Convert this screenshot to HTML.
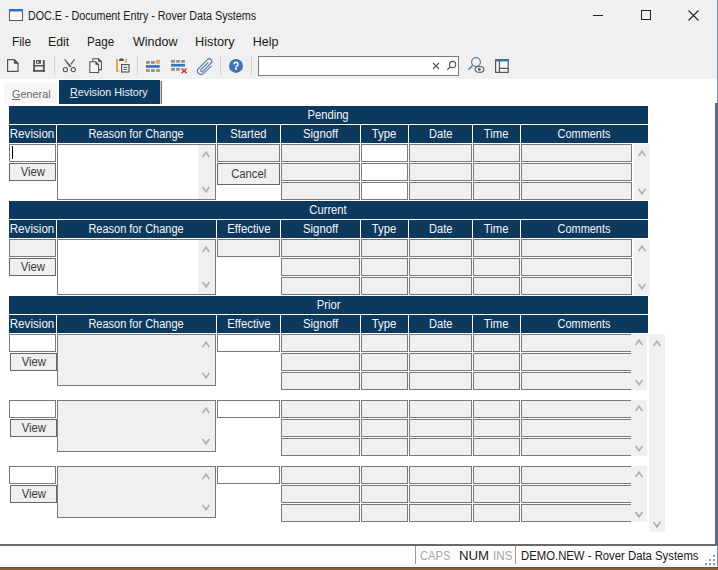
<!DOCTYPE html>
<html><head><meta charset="utf-8"><title>DOC.E - Document Entry</title>
<style>
html,body{margin:0;padding:0;}
body{width:718px;height:570px;position:relative;overflow:hidden;background:#fff;font-family:"Liberation Sans",sans-serif;}
body div,body svg{position:absolute;box-sizing:border-box;}
.seg{white-space:nowrap;color:#1a1a1a;}
.title{font-size:12px;line-height:20px;}
.menu{font-size:12.5px;line-height:18px;}
.tab{font-size:11.5px;line-height:18px;}
.status{font-size:12px;line-height:18px;}
.hdr{background:#0d395e;color:#f2f6fb;font-size:12px;text-align:center;white-space:nowrap;overflow:hidden;}
body span{display:inline-block;transform-origin:50% 50%;}
.fld{border:1px solid #7a7a7a;}
.fld.g{background:#f0f0f0;}
.fld.w{background:#fff;}
.btn{background:#f0f0f0;border:1px solid #676767;font-size:12px;text-align:center;color:#3a3a3a;line-height:15px;}
.sb{background:#f0f0f0;}
</style></head><body>
<div style="left:0;top:0;width:718px;height:79px;background:#f0f0f0"></div>
<svg style="left:9px;top:9px" width="14" height="12" viewBox="0 0 14 12"><rect x="0.5" y="0.5" width="13" height="11" fill="#fbfbfb" stroke="#5a5a5a"/><rect x="0" y="0" width="14" height="2.5" fill="#2f6fc0"/></svg>
<div class="seg title" style="left:28px;top:5.5px;transform:scaleX(0.893);transform-origin:0 0;">DOC.E - Document Entry - Rover Data Systems</div>
<div style="left:593px;top:15px;width:10px;height:1px;background:#222"></div>
<div style="left:641px;top:10px;width:10px;height:10px;border:1px solid #222"></div>
<svg style="left:688px;top:10px" width="11" height="11" viewBox="0 0 11 11"><path d="M0.5 0.5 L10.5 10.5 M10.5 0.5 L0.5 10.5" stroke="#222" stroke-width="1.1"/></svg>
<div class="seg menu" style="left:11.7px;top:33px;transform:scaleX(0.94);transform-origin:0 0;">File</div>
<div class="seg menu" style="left:48.3px;top:33px;transform:scaleX(0.98);transform-origin:0 0;">Edit</div>
<div class="seg menu" style="left:87.3px;top:33px;transform:scaleX(0.93);transform-origin:0 0;">Page</div>
<div class="seg menu" style="left:133.0px;top:33px;">Window</div>
<div class="seg menu" style="left:195.4px;top:33px;transform:scaleX(1.02);transform-origin:0 0;">History</div>
<div class="seg menu" style="left:252.7px;top:33px;">Help</div>
<svg style="left:4px;top:56px" width="20" height="20" viewBox="0 0 20 20"><path d="M3.6 3.6 H10.3 L14 7.3 V15.4 H3.6 Z" fill="#f4f4f4" stroke="#555" stroke-width="1.2"/><path d="M10.3 3.6 V7.3 H14 Z" fill="#555" stroke="#555" stroke-width="1"/></svg>
<svg style="left:30px;top:56px" width="20" height="20" viewBox="0 0 20 20"><rect x="3.2" y="4" width="1.8" height="11.8" fill="#555"/><rect x="12.9" y="4" width="1.8" height="11.8" fill="#555"/><rect x="3.2" y="14" width="11.5" height="1.8" fill="#555"/><rect x="3.2" y="9" width="11.5" height="1.5" fill="#555"/><rect x="6" y="4" width="5" height="3.7" fill="#555"/><rect x="7" y="5" width="1.3" height="1.8" fill="#f0f0f0"/></svg>
<div style="left:54px;top:56px;width:1px;height:19px;background:#d0d0d0"></div>
<svg style="left:60px;top:56px" width="20" height="20" viewBox="0 0 20 20"><polygon points="4.1,3.4 5,3 11.4,10.3 9.8,11.4" fill="#555"/><polygon points="14.3,3 15.1,3.5 11.4,8.7 10.4,7.9" fill="#555"/><circle cx="5.4" cy="13.6" r="2.1" fill="none" stroke="#555" stroke-width="1.1"/><circle cx="13.3" cy="13.6" r="2.1" fill="none" stroke="#555" stroke-width="1.1"/></svg>
<svg style="left:86px;top:55px" width="20" height="20" viewBox="0 0 20 20"><path d="M6.8 3.8 H12.6 L15.4 6.6 V14.6 H6.8 Z" fill="#f7f7f7" stroke="#555" stroke-width="1.1"/><path d="M12.6 3.8 V6.6 H15.4 Z" fill="#555" stroke="#555" stroke-width="0.8"/><path d="M3.8 6.8 H9.8 L12.6 9.6 V17.5 H3.8 Z" fill="#f7f7f7" stroke="#555" stroke-width="1.1"/><path d="M9.8 6.8 V9.6 H12.6 Z" fill="#555" stroke="#555" stroke-width="0.8"/></svg>
<svg style="left:112px;top:55px" width="20" height="20" viewBox="0 0 20 20"><rect x="4" y="4" width="1.9" height="12.5" fill="#e9a03a"/><rect x="4" y="15.3" width="3.5" height="1.2" fill="#e9a03a"/><rect x="13.1" y="4" width="1.6" height="3.6" fill="#d9a050"/><path d="M7 6 V4.5 Q9.4 2.2 11.8 4.5 V6 Z" fill="#555"/><rect x="9.6" y="9.6" width="7.4" height="7.4" fill="#fafafa" stroke="#555" stroke-width="1.2"/><path d="M11.3 12.3 H15.3 M11.3 14.4 H15.3" stroke="#555" stroke-width="1"/></svg>
<div style="left:137px;top:56px;width:1px;height:19px;background:#d0d0d0"></div>
<svg style="left:143px;top:56px" width="20" height="20" viewBox="0 0 20 20"><rect x="3" y="5" width="3.8" height="2.8" fill="#8e8e8e"/><rect x="8" y="5" width="3.8" height="2.8" fill="#8e8e8e"/><rect x="13.2" y="3.8" width="3.6" height="3.9" fill="#eaa040"/><rect x="3" y="9.1" width="13.8" height="2.7" fill="#3b72b8"/><rect x="3" y="13.2" width="3.8" height="2.7" fill="#8e8e8e"/><rect x="8" y="13.2" width="3.8" height="2.7" fill="#8e8e8e"/><rect x="13.2" y="13.2" width="3.6" height="2.7" fill="#8e8e8e"/></svg>
<svg style="left:168px;top:56px" width="22" height="22" viewBox="0 0 22 22"><rect x="3.1" y="4" width="3.8" height="2.7" fill="#8e8e8e"/><rect x="8.1" y="4" width="3.7" height="2.7" fill="#8e8e8e"/><rect x="13.1" y="4" width="3.9" height="2.7" fill="#8e8e8e"/><rect x="3.1" y="7.9" width="13.9" height="2.7" fill="#3b72b8"/><rect x="3.1" y="12" width="3.8" height="2.8" fill="#8e8e8e"/><rect x="8.1" y="12" width="3.7" height="2.8" fill="#8e8e8e"/><path d="M13.6 12.5 L18.6 17.2 M18.6 12.5 L13.6 17.2" stroke="#c83a3a" stroke-width="1.6"/></svg>
<svg style="left:194px;top:55px" width="22" height="22" viewBox="0 0 22 22"><path d="M17.6 10.8 L9.4 18.4 a3.4 3.4 0 0 1 -4.9 -4.8 L13.4 4.6 a2.5 2.5 0 0 1 3.6 3.6 L8.8 16.4 a1.2 1.2 0 0 1 -1.8 -1.7 L14.3 7.4" fill="#e6f0fa" fill-opacity="0.6" stroke="#56799f" stroke-width="1.15"/></svg>
<div style="left:220px;top:56px;width:1px;height:19px;background:#d0d0d0"></div>
<svg style="left:225px;top:55px" width="22" height="22" viewBox="0 0 22 22"><circle cx="11" cy="10.9" r="7" fill="#3f74b6"/><path d="M9 9.2 a2 2 0 1 1 3 1.7 c-0.7 0.4 -1 0.7 -1 1.5" fill="none" stroke="#fff" stroke-width="1.5"/><rect x="10.1" y="13" width="1.8" height="1.7" fill="#fff"/></svg>
<div style="left:251px;top:56px;width:1px;height:19px;background:#d0d0d0"></div>
<div style="left:258px;top:56px;width:201px;height:20px;background:#fff;border:1px solid #7a7a7a"></div>
<svg style="left:432px;top:62px" width="8" height="8" viewBox="0 0 8 8"><path d="M1 1 L7 7 M7 1 L1 7" stroke="#555" stroke-width="1.1"/></svg>
<svg style="left:446px;top:60px" width="11" height="11" viewBox="0 0 11 11"><circle cx="6.6" cy="4.5" r="3.1" fill="none" stroke="#555" stroke-width="1.1"/><path d="M4.4 6.8 L1.3 9.9" stroke="#555" stroke-width="1.3"/></svg>
<svg style="left:464px;top:54px" width="24" height="22" viewBox="0 0 24 22"><circle cx="12" cy="8" r="4.4" fill="none" stroke="#5a7ea6" stroke-width="1.2"/><path d="M8.8 11.3 L4.3 15.8" stroke="#5a7ea6" stroke-width="1.5"/><ellipse cx="15.5" cy="15.4" rx="4.4" ry="2.9" fill="#f0f0f0" stroke="#555" stroke-width="1.1"/><circle cx="15.3" cy="15.4" r="1.4" fill="#555"/></svg>
<svg style="left:494px;top:58px" width="16" height="16" viewBox="0 0 16 16"><rect x="1.6" y="1.6" width="12.6" height="12.8" fill="#f6f6f6" stroke="#555" stroke-width="1.2"/><rect x="1" y="1" width="14" height="2.4" fill="#3d6fb0"/><path d="M5.4 3 V14.4 M5.4 10.4 H14.4" stroke="#555" stroke-width="1.2"/></svg>
<div style="left:4px;top:83px;width:53px;height:20px;background:#f6f6f6"></div>
<div class="seg tab" style="left:11.9px;top:84.5px;transform:scaleX(0.945);transform-origin:0 0;color:#6a6a6a;"><u>G</u>eneral</div>
<div style="left:59px;top:80px;width:101px;height:24px;background:#0d395e"></div>
<div style="left:160px;top:81px;width:1px;height:23px;background:#c8ccd0"></div>
<div style="left:161px;top:81px;width:1px;height:23px;background:#7a7068"></div>
<div class="seg tab" style="left:70.0px;top:82.5px;transform:scaleX(0.935);transform-origin:0 0;color:#eaf2fb;"><u>R</u>evision History</div>
<div class="hdr" style="left:9px;top:106px;width:639px;height:18px;line-height:19px"><span style="transform:scaleX(0.935)">Pending</span></div>
<div class="hdr" style="left:9px;top:125px;width:47px;height:18px;line-height:18px"><span style="transform:scaleX(0.97)">Revision</span></div>
<div class="hdr" style="left:57px;top:125px;width:159px;height:18px;line-height:18px"><span style="transform:scaleX(0.915)">Reason for Change</span></div>
<div class="hdr" style="left:217px;top:125px;width:63px;height:18px;line-height:18px"><span style="transform:scaleX(0.935)">Started</span></div>
<div class="hdr" style="left:281px;top:125px;width:79px;height:18px;line-height:18px"><span style="transform:scaleX(0.95)">Signoff</span></div>
<div class="hdr" style="left:361px;top:125px;width:47px;height:18px;line-height:18px"><span style="transform:scaleX(0.945)">Type</span></div>
<div class="hdr" style="left:409px;top:125px;width:63px;height:18px;line-height:18px"><span style="transform:scaleX(0.925)">Date</span></div>
<div class="hdr" style="left:473px;top:125px;width:47px;height:18px;line-height:18px"><span style="transform:scaleX(0.94)">Time</span></div>
<div class="hdr" style="left:521px;top:125px;width:127px;height:18px;line-height:18px"><span style="transform:scaleX(0.91)">Comments</span></div>
<div class="hdr" style="left:9px;top:201px;width:639px;height:18px;line-height:19px"><span style="transform:scaleX(0.935)">Current</span></div>
<div class="hdr" style="left:9px;top:220px;width:47px;height:18px;line-height:18px"><span style="transform:scaleX(0.97)">Revision</span></div>
<div class="hdr" style="left:57px;top:220px;width:159px;height:18px;line-height:18px"><span style="transform:scaleX(0.915)">Reason for Change</span></div>
<div class="hdr" style="left:217px;top:220px;width:63px;height:18px;line-height:18px"><span style="transform:scaleX(0.945)">Effective</span></div>
<div class="hdr" style="left:281px;top:220px;width:79px;height:18px;line-height:18px"><span style="transform:scaleX(0.95)">Signoff</span></div>
<div class="hdr" style="left:361px;top:220px;width:47px;height:18px;line-height:18px"><span style="transform:scaleX(0.945)">Type</span></div>
<div class="hdr" style="left:409px;top:220px;width:63px;height:18px;line-height:18px"><span style="transform:scaleX(0.925)">Date</span></div>
<div class="hdr" style="left:473px;top:220px;width:47px;height:18px;line-height:18px"><span style="transform:scaleX(0.94)">Time</span></div>
<div class="hdr" style="left:521px;top:220px;width:127px;height:18px;line-height:18px"><span style="transform:scaleX(0.91)">Comments</span></div>
<div class="hdr" style="left:9px;top:296px;width:639px;height:18px;line-height:19px"><span style="transform:scaleX(0.935)">Prior</span></div>
<div class="hdr" style="left:9px;top:315px;width:47px;height:18px;line-height:18px"><span style="transform:scaleX(0.97)">Revision</span></div>
<div class="hdr" style="left:57px;top:315px;width:159px;height:18px;line-height:18px"><span style="transform:scaleX(0.915)">Reason for Change</span></div>
<div class="hdr" style="left:217px;top:315px;width:63px;height:18px;line-height:18px"><span style="transform:scaleX(0.945)">Effective</span></div>
<div class="hdr" style="left:281px;top:315px;width:79px;height:18px;line-height:18px"><span style="transform:scaleX(0.95)">Signoff</span></div>
<div class="hdr" style="left:361px;top:315px;width:47px;height:18px;line-height:18px"><span style="transform:scaleX(0.945)">Type</span></div>
<div class="hdr" style="left:409px;top:315px;width:63px;height:18px;line-height:18px"><span style="transform:scaleX(0.925)">Date</span></div>
<div class="hdr" style="left:473px;top:315px;width:47px;height:18px;line-height:18px"><span style="transform:scaleX(0.94)">Time</span></div>
<div class="hdr" style="left:521px;top:315px;width:127px;height:18px;line-height:18px"><span style="transform:scaleX(0.91)">Comments</span></div>
<div class="fld w" style="left:9px;top:144px;width:47px;height:18px;"></div>
<div style="left:12px;top:146px;width:1px;height:13px;background:#000"></div>
<div class="btn" style="left:9px;top:163px;width:47px;height:18px;line-height:16px"><span style="transform:scaleX(0.94)">View</span></div>
<div class="fld w" style="left:57px;top:144px;width:159px;height:56px;"></div>
<div class="sb" style="left:198px;top:145px;width:17px;height:54px;"></div>
<svg style="left:200.5px;top:150px" width="10" height="9" viewBox="0 0 10 9"><path d="M1.6 7 L5 2.2 L8.4 7" fill="none" stroke="#b0b0b0" stroke-width="1.7"/></svg>
<svg style="left:200.5px;top:184.5px" width="10" height="9" viewBox="0 0 10 9"><path d="M1.6 2 L5 6.8 L8.4 2" fill="none" stroke="#b0b0b0" stroke-width="1.7"/></svg>
<div class="fld g" style="left:217px;top:144px;width:63px;height:18px;"></div>
<div class="btn" style="left:217px;top:163px;width:63px;height:22px;line-height:20px"><span style="transform:scaleX(0.936)">Cancel</span></div>
<div class="fld g" style="left:281px;top:144px;width:79px;height:18px;"></div>
<div class="fld w" style="left:361px;top:144px;width:47px;height:18px;"></div>
<div class="fld g" style="left:409px;top:144px;width:63px;height:18px;"></div>
<div class="fld g" style="left:473px;top:144px;width:47px;height:18px;"></div>
<div class="fld g" style="left:521px;top:144px;width:111px;height:18px;"></div>
<div class="fld g" style="left:281px;top:163px;width:79px;height:18px;"></div>
<div class="fld w" style="left:361px;top:163px;width:47px;height:18px;"></div>
<div class="fld g" style="left:409px;top:163px;width:63px;height:18px;"></div>
<div class="fld g" style="left:473px;top:163px;width:47px;height:18px;"></div>
<div class="fld g" style="left:521px;top:163px;width:111px;height:18px;"></div>
<div class="fld g" style="left:281px;top:182px;width:79px;height:18px;"></div>
<div class="fld w" style="left:361px;top:182px;width:47px;height:18px;"></div>
<div class="fld g" style="left:409px;top:182px;width:63px;height:18px;"></div>
<div class="fld g" style="left:473px;top:182px;width:47px;height:18px;"></div>
<div class="fld g" style="left:521px;top:182px;width:111px;height:18px;"></div>
<div class="sb" style="left:634px;top:144px;width:16px;height:56px;"></div>
<svg style="left:637.0px;top:148.7px" width="10" height="9" viewBox="0 0 10 9"><path d="M1.6 7 L5 2.2 L8.4 7" fill="none" stroke="#b0b0b0" stroke-width="1.7"/></svg>
<svg style="left:637.0px;top:187.3px" width="10" height="9" viewBox="0 0 10 9"><path d="M1.6 2 L5 6.8 L8.4 2" fill="none" stroke="#b0b0b0" stroke-width="1.7"/></svg>
<div class="fld g" style="left:9px;top:239px;width:47px;height:18px;"></div>
<div class="btn" style="left:9px;top:258px;width:47px;height:18px;line-height:16px"><span style="transform:scaleX(0.94)">View</span></div>
<div class="fld w" style="left:57px;top:239px;width:159px;height:56px;"></div>
<div class="sb" style="left:198px;top:240px;width:17px;height:54px;"></div>
<svg style="left:200.5px;top:245px" width="10" height="9" viewBox="0 0 10 9"><path d="M1.6 7 L5 2.2 L8.4 7" fill="none" stroke="#b0b0b0" stroke-width="1.7"/></svg>
<svg style="left:200.5px;top:279.5px" width="10" height="9" viewBox="0 0 10 9"><path d="M1.6 2 L5 6.8 L8.4 2" fill="none" stroke="#b0b0b0" stroke-width="1.7"/></svg>
<div class="fld g" style="left:217px;top:239px;width:63px;height:18px;"></div>
<div class="fld g" style="left:281px;top:239px;width:79px;height:18px;"></div>
<div class="fld g" style="left:361px;top:239px;width:47px;height:18px;"></div>
<div class="fld g" style="left:409px;top:239px;width:63px;height:18px;"></div>
<div class="fld g" style="left:473px;top:239px;width:47px;height:18px;"></div>
<div class="fld g" style="left:521px;top:239px;width:111px;height:18px;"></div>
<div class="fld g" style="left:281px;top:258px;width:79px;height:18px;"></div>
<div class="fld g" style="left:361px;top:258px;width:47px;height:18px;"></div>
<div class="fld g" style="left:409px;top:258px;width:63px;height:18px;"></div>
<div class="fld g" style="left:473px;top:258px;width:47px;height:18px;"></div>
<div class="fld g" style="left:521px;top:258px;width:111px;height:18px;"></div>
<div class="fld g" style="left:281px;top:277px;width:79px;height:18px;"></div>
<div class="fld g" style="left:361px;top:277px;width:47px;height:18px;"></div>
<div class="fld g" style="left:409px;top:277px;width:63px;height:18px;"></div>
<div class="fld g" style="left:473px;top:277px;width:47px;height:18px;"></div>
<div class="fld g" style="left:521px;top:277px;width:111px;height:18px;"></div>
<div class="sb" style="left:634px;top:239px;width:16px;height:56px;"></div>
<svg style="left:637.0px;top:243.7px" width="10" height="9" viewBox="0 0 10 9"><path d="M1.6 7 L5 2.2 L8.4 7" fill="none" stroke="#b0b0b0" stroke-width="1.7"/></svg>
<svg style="left:637.0px;top:282.3px" width="10" height="9" viewBox="0 0 10 9"><path d="M1.6 2 L5 6.8 L8.4 2" fill="none" stroke="#b0b0b0" stroke-width="1.7"/></svg>
<div class="fld w" style="left:9px;top:334px;width:47px;height:18px;"></div>
<div class="btn" style="left:10px;top:353px;width:47px;height:18px;line-height:16px"><span style="transform:scaleX(0.94)">View</span></div>
<div class="fld g" style="left:57px;top:334px;width:159px;height:52px;"></div>
<div class="sb" style="left:198px;top:335px;width:17px;height:50px;"></div>
<svg style="left:200.5px;top:340px" width="10" height="9" viewBox="0 0 10 9"><path d="M1.6 7 L5 2.2 L8.4 7" fill="none" stroke="#b0b0b0" stroke-width="1.7"/></svg>
<svg style="left:200.5px;top:370.5px" width="10" height="9" viewBox="0 0 10 9"><path d="M1.6 2 L5 6.8 L8.4 2" fill="none" stroke="#b0b0b0" stroke-width="1.7"/></svg>
<div class="fld w" style="left:217px;top:334px;width:63px;height:18px;"></div>
<div class="fld g" style="left:281px;top:334px;width:79px;height:18px;"></div>
<div class="fld g" style="left:361px;top:334px;width:47px;height:18px;"></div>
<div class="fld g" style="left:409px;top:334px;width:63px;height:18px;"></div>
<div class="fld g" style="left:473px;top:334px;width:47px;height:18px;"></div>
<div class="fld g" style="left:521px;top:334px;width:119px;height:18px;"></div>
<div class="fld g" style="left:281px;top:353px;width:79px;height:18px;"></div>
<div class="fld g" style="left:361px;top:353px;width:47px;height:18px;"></div>
<div class="fld g" style="left:409px;top:353px;width:63px;height:18px;"></div>
<div class="fld g" style="left:473px;top:353px;width:47px;height:18px;"></div>
<div class="fld g" style="left:521px;top:353px;width:119px;height:18px;"></div>
<div class="fld g" style="left:281px;top:372px;width:79px;height:18px;"></div>
<div class="fld g" style="left:361px;top:372px;width:47px;height:18px;"></div>
<div class="fld g" style="left:409px;top:372px;width:63px;height:18px;"></div>
<div class="fld g" style="left:473px;top:372px;width:47px;height:18px;"></div>
<div class="fld g" style="left:521px;top:372px;width:119px;height:18px;"></div>
<div class="sb" style="left:631px;top:334px;width:16px;height:56px;"></div>
<svg style="left:634.0px;top:338px" width="10" height="9" viewBox="0 0 10 9"><path d="M1.6 7 L5 2.2 L8.4 7" fill="none" stroke="#b0b0b0" stroke-width="1.7"/></svg>
<svg style="left:634.0px;top:377.5px" width="10" height="9" viewBox="0 0 10 9"><path d="M1.6 2 L5 6.8 L8.4 2" fill="none" stroke="#b0b0b0" stroke-width="1.7"/></svg>
<div class="fld w" style="left:9px;top:400px;width:47px;height:18px;"></div>
<div class="btn" style="left:10px;top:419px;width:47px;height:18px;line-height:16px"><span style="transform:scaleX(0.94)">View</span></div>
<div class="fld g" style="left:57px;top:400px;width:159px;height:52px;"></div>
<div class="sb" style="left:198px;top:401px;width:17px;height:50px;"></div>
<svg style="left:200.5px;top:406px" width="10" height="9" viewBox="0 0 10 9"><path d="M1.6 7 L5 2.2 L8.4 7" fill="none" stroke="#b0b0b0" stroke-width="1.7"/></svg>
<svg style="left:200.5px;top:436.5px" width="10" height="9" viewBox="0 0 10 9"><path d="M1.6 2 L5 6.8 L8.4 2" fill="none" stroke="#b0b0b0" stroke-width="1.7"/></svg>
<div class="fld w" style="left:217px;top:400px;width:63px;height:18px;"></div>
<div class="fld g" style="left:281px;top:400px;width:79px;height:18px;"></div>
<div class="fld g" style="left:361px;top:400px;width:47px;height:18px;"></div>
<div class="fld g" style="left:409px;top:400px;width:63px;height:18px;"></div>
<div class="fld g" style="left:473px;top:400px;width:47px;height:18px;"></div>
<div class="fld g" style="left:521px;top:400px;width:119px;height:18px;"></div>
<div class="fld g" style="left:281px;top:419px;width:79px;height:18px;"></div>
<div class="fld g" style="left:361px;top:419px;width:47px;height:18px;"></div>
<div class="fld g" style="left:409px;top:419px;width:63px;height:18px;"></div>
<div class="fld g" style="left:473px;top:419px;width:47px;height:18px;"></div>
<div class="fld g" style="left:521px;top:419px;width:119px;height:18px;"></div>
<div class="fld g" style="left:281px;top:438px;width:79px;height:18px;"></div>
<div class="fld g" style="left:361px;top:438px;width:47px;height:18px;"></div>
<div class="fld g" style="left:409px;top:438px;width:63px;height:18px;"></div>
<div class="fld g" style="left:473px;top:438px;width:47px;height:18px;"></div>
<div class="fld g" style="left:521px;top:438px;width:119px;height:18px;"></div>
<div class="sb" style="left:631px;top:400px;width:16px;height:56px;"></div>
<svg style="left:634.0px;top:404px" width="10" height="9" viewBox="0 0 10 9"><path d="M1.6 7 L5 2.2 L8.4 7" fill="none" stroke="#b0b0b0" stroke-width="1.7"/></svg>
<svg style="left:634.0px;top:443.5px" width="10" height="9" viewBox="0 0 10 9"><path d="M1.6 2 L5 6.8 L8.4 2" fill="none" stroke="#b0b0b0" stroke-width="1.7"/></svg>
<div class="fld w" style="left:9px;top:466px;width:47px;height:18px;"></div>
<div class="btn" style="left:10px;top:485px;width:47px;height:18px;line-height:16px"><span style="transform:scaleX(0.94)">View</span></div>
<div class="fld g" style="left:57px;top:466px;width:159px;height:52px;"></div>
<div class="sb" style="left:198px;top:467px;width:17px;height:50px;"></div>
<svg style="left:200.5px;top:472px" width="10" height="9" viewBox="0 0 10 9"><path d="M1.6 7 L5 2.2 L8.4 7" fill="none" stroke="#b0b0b0" stroke-width="1.7"/></svg>
<svg style="left:200.5px;top:502.5px" width="10" height="9" viewBox="0 0 10 9"><path d="M1.6 2 L5 6.8 L8.4 2" fill="none" stroke="#b0b0b0" stroke-width="1.7"/></svg>
<div class="fld w" style="left:217px;top:466px;width:63px;height:18px;"></div>
<div class="fld g" style="left:281px;top:466px;width:79px;height:18px;"></div>
<div class="fld g" style="left:361px;top:466px;width:47px;height:18px;"></div>
<div class="fld g" style="left:409px;top:466px;width:63px;height:18px;"></div>
<div class="fld g" style="left:473px;top:466px;width:47px;height:18px;"></div>
<div class="fld g" style="left:521px;top:466px;width:119px;height:18px;"></div>
<div class="fld g" style="left:281px;top:485px;width:79px;height:18px;"></div>
<div class="fld g" style="left:361px;top:485px;width:47px;height:18px;"></div>
<div class="fld g" style="left:409px;top:485px;width:63px;height:18px;"></div>
<div class="fld g" style="left:473px;top:485px;width:47px;height:18px;"></div>
<div class="fld g" style="left:521px;top:485px;width:119px;height:18px;"></div>
<div class="fld g" style="left:281px;top:504px;width:79px;height:18px;"></div>
<div class="fld g" style="left:361px;top:504px;width:47px;height:18px;"></div>
<div class="fld g" style="left:409px;top:504px;width:63px;height:18px;"></div>
<div class="fld g" style="left:473px;top:504px;width:47px;height:18px;"></div>
<div class="fld g" style="left:521px;top:504px;width:119px;height:18px;"></div>
<div class="sb" style="left:631px;top:466px;width:16px;height:56px;"></div>
<svg style="left:634.0px;top:470px" width="10" height="9" viewBox="0 0 10 9"><path d="M1.6 7 L5 2.2 L8.4 7" fill="none" stroke="#b0b0b0" stroke-width="1.7"/></svg>
<svg style="left:634.0px;top:509.5px" width="10" height="9" viewBox="0 0 10 9"><path d="M1.6 2 L5 6.8 L8.4 2" fill="none" stroke="#b0b0b0" stroke-width="1.7"/></svg>
<div class="sb" style="left:649px;top:334px;width:16px;height:198px;"></div>
<svg style="left:652.0px;top:338.5px" width="10" height="9" viewBox="0 0 10 9"><path d="M1.6 7 L5 2.2 L8.4 7" fill="none" stroke="#b0b0b0" stroke-width="1.7"/></svg>
<svg style="left:652.0px;top:519.5px" width="10" height="9" viewBox="0 0 10 9"><path d="M1.6 2 L5 6.8 L8.4 2" fill="none" stroke="#b0b0b0" stroke-width="1.7"/></svg>
<div style="left:717px;top:0;width:1px;height:567px;background:#7d8ca3"></div>
<div style="left:715px;top:103px;width:3px;height:442px;background:#5d6d86"></div>
<div style="left:0;top:544px;width:717px;height:2px;background:#6a6a6a"></div>
<div style="left:0;top:546px;width:717px;height:20px;background:#fdfdfd"></div>
<div style="left:0;top:565px;width:717px;height:1px;background:#eef0fa"></div>
<div style="left:0;top:566px;width:718px;height:1px;background:#f0fbff"></div>
<div style="left:0;top:567px;width:718px;height:1px;background:#5a5550"></div>
<div style="left:0;top:568px;width:718px;height:2px;background:#8c5e30"></div>
<div style="left:415px;top:546px;width:1px;height:18px;background:#9a9a9a"></div>
<div style="left:515px;top:546px;width:1px;height:18px;background:#9a9a9a"></div>
<div class="seg status" style="left:420.4px;top:546.5px;transform:scaleX(0.93);transform-origin:0 0;color:#a8a8a8;">CAPS</div>
<div class="seg status" style="left:458.5px;top:546.5px;transform:scaleX(1.1);transform-origin:0 0;color:#1a1a1a;">NUM</div>
<div class="seg status" style="left:493.3px;top:546.5px;transform:scaleX(0.97);transform-origin:0 0;color:#a8a8a8;">INS</div>
<div class="seg status" style="left:520.8px;top:546.5px;transform:scaleX(0.944);transform-origin:0 0;color:#1a1a1a;">DEMO.NEW - Rover Data Systems</div>
<div style="left:713px;top:555px;width:2px;height:2px;background:#9a9a9a"></div>
<div style="left:709px;top:559px;width:2px;height:2px;background:#9a9a9a"></div>
<div style="left:713px;top:559px;width:2px;height:2px;background:#9a9a9a"></div>
<div style="left:705px;top:563px;width:2px;height:2px;background:#9a9a9a"></div>
<div style="left:709px;top:563px;width:2px;height:2px;background:#9a9a9a"></div>
<div style="left:713px;top:563px;width:2px;height:2px;background:#9a9a9a"></div>
</body></html>
